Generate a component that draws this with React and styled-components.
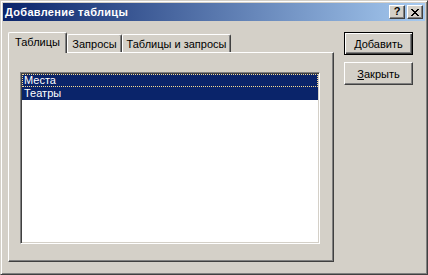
import React from 'react';
import styled, { createGlobalStyle } from 'styled-components';

const GlobalStyle = createGlobalStyle`
  html, body {
    margin: 0;
    padding: 0;
    background: #d4d0c8;
  }
  body {
    font-family: 'Liberation Sans', Arial, sans-serif;
    font-size: 11px;
    color: #000;
  }
`;

const tables = ['Места', 'Театры'];
const tabs = ['Таблицы', 'Запросы', 'Таблицы и запросы'];
const tabWidths = [59, 55, 109];

class App extends React.Component {
  state = {
    activeTab: 0,
    selected: [0, 1]
  }

  handleTab = (index) => () => {
    this.setState({ activeTab: index });
  }

  render() {
    const { activeTab, selected } = this.state;
    return (
      <>
        <GlobalStyle />
        <Window>
          <TitleBar>
            <Caption>Добавление таблицы</Caption>
            <CaptionButtons>
              <CaptionButton>
                <HelpGlyph>?</HelpGlyph>
              </CaptionButton>
              <CaptionButton>
                <svg width="8" height="7" viewBox="0 0 8 7" shapeRendering="crispEdges">
                  <path d="M0 0h2v1H0zM6 0h2v1H6zM1 1h2v1H1zM5 1h2v1H5zM2 2h4v1H2zM3 3h2v1H3zM2 4h4v1H2zM1 5h2v1H1zM5 5h2v1H5zM0 6h2v1H0zM6 6h2v1H6z" fill="#000" />
                </svg>
              </CaptionButton>
            </CaptionButtons>
          </TitleBar>
          <Body>
            <TabControl>
              <TabRow>
                {tabs.map((label, i) => (
                  <Tab
                    key={label}
                    $active={i === activeTab}
                    $width={tabWidths[i]}
                    onClick={this.handleTab(i)}
                  >
                    {label}
                  </Tab>
                ))}
              </TabRow>
              <TabPanel>
                <ListBox>
                  {tables.map((name, i) => (
                    <ListItem key={name} $selected={selected.includes(i)} $focused={i === 0}>
                      {name}
                    </ListItem>
                  ))}
                </ListBox>
              </TabPanel>
            </TabControl>
            <ButtonColumn>
              <Button $default><u>Д</u>обавить</Button>
              <Button><u>З</u>акрыть</Button>
            </ButtonColumn>
          </Body>
        </Window>
      </>
    );
  }
}

const Window = styled.div`
  box-sizing: border-box;
  width: 428px;
  height: 275px;
  padding: 2px;
  border: 1px solid;
  border-color: #d4d0c8 #404040 #404040 #d4d0c8;
  box-shadow: inset 1px 1px #ffffff, inset -1px -1px #808080;
  background: #d4d0c8;
  display: flex;
  flex-direction: column;
`;

const TitleBar = styled.div`
  height: 18px;
  display: flex;
  align-items: center;
  justify-content: space-between;
  padding: 0 2px 0 2px;
  background: linear-gradient(to right, #0a246a, #a6caf0);
`;

const Caption = styled.div`
  color: #ffffff;
  font-weight: 700;
  font-size: 11px;
  letter-spacing: 0.3px;
  padding-left: 0;
  white-space: nowrap;
`;

const CaptionButtons = styled.div`
  display: flex;
  gap: 2px;
`;

const CaptionButton = styled.div`
  box-sizing: border-box;
  width: 16px;
  height: 14px;
  display: flex;
  align-items: center;
  justify-content: center;
  background: #d4d0c8;
  border: 1px solid;
  border-color: #ffffff #404040 #404040 #ffffff;
  box-shadow: inset -1px -1px #808080;
`;

const HelpGlyph = styled.span`
  font-weight: 700;
  font-size: 11px;
  line-height: 11px;
  margin-top: -1px;
`;

const Body = styled.div`
  flex: 1;
  display: flex;
  padding: 11px 0 0 5px;
`;

const TabControl = styled.div`
  width: 326px;
  display: flex;
  flex-direction: column;
`;

const TabRow = styled.div`
  height: 20px;
  display: flex;
  align-items: flex-end;
  position: relative;
  z-index: 1;
`;

const Tab = styled.div`
  box-sizing: border-box;
  width: ${(p) => p.$width}px;
  height: ${(p) => (p.$active ? 21 : 18)}px;
  margin-bottom: ${(p) => (p.$active ? -1 : 0)}px;
  display: flex;
  align-items: center;
  justify-content: center;
  padding-bottom: ${(p) => (p.$active ? 2 : 0)}px;
  background: #d4d0c8;
  border-left: 1px solid #ffffff;
  border-top: 1px solid #ffffff;
  border-right: 1px solid #404040;
  border-radius: 2px 2px 0 0;
  box-shadow: inset -1px 0 #808080;
  white-space: nowrap;
  cursor: default;
`;

const TabPanel = styled.div`
  box-sizing: border-box;
  height: 210px;
  padding: 19px 0 0 11px;
  border: 1px solid;
  border-color: #ffffff #404040 #404040 #ffffff;
  box-shadow: inset -1px -1px #808080;
`;

const ListBox = styled.div`
  box-sizing: border-box;
  width: 300px;
  height: 172px;
  background: #ffffff;
  border: 1px solid;
  border-color: #808080 #ffffff #ffffff #808080;
  box-shadow: inset 1px 1px #404040, inset -1px -1px #d4d0c8;
  padding: 1px;
`;

const ListItem = styled.div`
  box-sizing: border-box;
  height: 13px;
  line-height: 12px;
  padding-left: 2px;
  color: ${(p) => (p.$selected ? '#ffffff' : '#000000')};
  background: ${(p) => (p.$selected ? '#0a246a' : 'transparent')};
  outline: ${(p) => (p.$focused ? '1px dotted #f5db95' : 'none')};
  outline-offset: -1px;
`;

const ButtonColumn = styled.div`
  display: flex;
  flex-direction: column;
  gap: 7px;
  margin-left: 10px;
`;

const Button = styled.div`
  box-sizing: border-box;
  width: 69px;
  height: 23px;
  display: flex;
  align-items: center;
  justify-content: center;
  background: #d4d0c8;
  border: 1px solid ${(p) => (p.$default ? '#000000' : '#ffffff')};
  border-color: ${(p) => (p.$default ? '#000000' : '#ffffff #404040 #404040 #ffffff')};
  box-shadow: ${(p) => (p.$default
    ? 'inset 1px 1px #ffffff, inset -1px -1px #404040, inset -2px -2px #808080'
    : 'inset -1px -1px #808080')};
  cursor: default;

  u {
    text-decoration: underline;
    text-underline-offset: 1px;
  }
`;

export default App;
